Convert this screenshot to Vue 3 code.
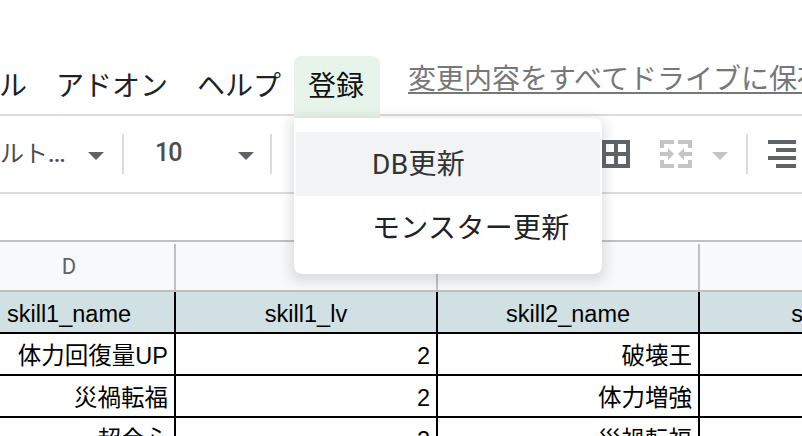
<script setup>
const headings = ['D', '', '', '']
const rows = [
  ['体力回復量UP', '2', '破壊王', ''],
  ['災禍転福', '2', '体力増強', ''],
  ['超会心', '2', '災禍転福', ''],
]
const titles = ['skill1_name', 'skill1_lv', 'skill2_name', 'skill2_lv']
const actions = ['DB更新', 'モンスター更新']
</script>

<template>
  <div class="window">
    <nav class="menubar">
      <span class="menu first">ル</span>
      <span class="menu">アドオン</span>
      <span class="menu help">ヘルプ</span>
      <div class="menu active">
        登録
        <ul class="dropdown">
          <li v-for="(a, i) in actions" :key="a" :class="{ hover: i === 0 }">{{ a }}</li>
        </ul>
      </div>
      <span class="saved">変更内容をすべてドライブに保存</span>
    </nav>

    <div class="toolbar">
      <span class="font-name">ルト<span class="dots">...</span></span>
      <svg class="caret" viewBox="0 0 16 8"><path d="M0 0H16L8 8Z" /></svg>
      <i class="divider d1"></i>
      <span class="font-size">10</span>
      <svg class="caret" viewBox="0 0 16 8"><path d="M0 0H16L8 8Z" /></svg>
      <i class="divider d2"></i>
      <svg class="borders" width="28" height="28" viewBox="0 0 28 28">
        <path fill-rule="evenodd" d="M0 0H28V28H0ZM4 4V12H12V4ZM16 4V12H24V4ZM4 16V24H12V16ZM16 16V24H24V16Z" />
      </svg>
      <svg class="merge" width="32" height="28" viewBox="0 0 32 28">
        <path d="M0 0H14V4H4V8H0ZM18 0H32V8H28V4H18ZM0 20H4V24H14V28H0ZM28 20H32V28H18V24H28ZM0 12H8V8L14 14L8 20V16H0ZM32 12H24V8L18 14L24 20V16H32Z" />
      </svg>
      <svg class="caret muted" viewBox="0 0 16 8"><path d="M0 0H16L8 8Z" /></svg>
      <i class="divider d3"></i>
      <svg class="align" width="28" height="28" viewBox="0 0 28 28">
        <path d="M0 0H28V4H0ZM8 8H28V12H8ZM0 16H28V20H0ZM8 24H28V28H8Z" />
      </svg>
    </div>

    <div class="formula"></div>

    <div class="sheet">
      <div class="line heads">
        <div v-for="(h, i) in headings" :key="i" class="head">{{ h }}</div>
      </div>
      <div class="line">
        <div v-for="t in titles" :key="t" class="cell title">{{ t }}</div>
      </div>
      <div v-for="(r, i) in rows" :key="i" class="line">
        <div v-for="(c, j) in r" :key="j" class="cell">{{ c }}</div>
      </div>
    </div>
  </div>
</template>

<style>
body {
  margin: 0;
  overflow: hidden;
}
</style>

<style scoped>
.window {
  box-sizing: border-box;
  width: 802px;
  height: 436px;
  padding-top: 56px;
  overflow: hidden;
  background: #fff;
  font-family: Roboto, "Noto Sans CJK JP", sans-serif;
  color: #202124;
}
.menubar {
  box-sizing: border-box;
  display: flex;
  height: 60px;
  border-bottom: 2px solid #dadce0;
  font-size: 28px;
  line-height: 61px;
  white-space: nowrap;
}
.menu {
  box-sizing: border-box;
  flex: none;
  height: 62px;
  padding: 0 14px;
  margin-right: 1px;
}
.first {
  padding-left: 0;
  margin-left: -1px;
  margin-right: 1px;
}
.help {
  margin-right: -1px;
}
.active {
  position: relative;
  z-index: 3;
  width: 86px;
  margin-right: 28px;
  border-radius: 8px 8px 0 0;
  background: #e6f4ea;
  color: #111;
}
.saved {
  line-height: 47px;
  color: #777;
  text-decoration: underline;
  text-decoration-thickness: 2px;
  text-decoration-skip-ink: none;
  text-underline-offset: 3px;
}
.dropdown {
  position: absolute;
  left: 0;
  top: 62px;
  box-sizing: border-box;
  width: 308px;
  height: 156px;
  margin: 0;
  padding: 14px 2px;
  border-radius: 0 8px 8px 8px;
  background: #fff;
  box-shadow: 0 4px 12px 4px rgba(60, 64, 67, 0.15);
  list-style: none;
  color: #202124;
  letter-spacing: 0.3px;
}
.dropdown li {
  box-sizing: border-box;
  height: 64px;
  padding-left: 76px;
  line-height: 66px;
}
.dropdown .hover {
  background: #f1f3f4;
  color: #333;
}
.toolbar {
  box-sizing: border-box;
  display: flex;
  align-items: center;
  height: 78px;
  border-bottom: 2px solid #dadce0;
  color: #4d4d4d;
  fill: #5f6368;
}
.toolbar > * {
  flex: none;
}
.font-name {
  width: 88px;
  font-size: 24px;
  line-height: 40px;
}
.dots {
  font-weight: 500;
  letter-spacing: -1px;
}
.caret {
  width: 16px;
  height: 8px;
  margin-top: 4px;
}
.divider {
  width: 2px;
  height: 40px;
  background: #dadce0;
}
.d1 {
  margin-left: 18px;
}
.font-size {
  width: 83px;
  margin-left: 31px;
  font-size: 25px;
  font-weight: 500;
  line-height: 36px;
  letter-spacing: -1px;
  margin-top: -2px;
}
.d2 {
  margin-left: 16px;
}
.borders {
  margin-left: 330px;
}
.merge {
  margin-left: 30px;
}
.merge,
.muted {
  fill: #c3c4c6;
}
.muted {
  margin-left: 20px;
}
.d3 {
  margin-left: 18px;
}
.align {
  margin-left: 20px;
}
.formula {
  height: 46px;
}
.sheet {
  width: 998px;
  margin-left: -36px;
  border-top: 2px solid #c0c0c0;
}
.line {
  display: grid;
  grid-template-columns: 212px repeat(3, 262px);
}
.heads {
  box-sizing: border-box;
  height: 50px;
  padding-top: 2px;
  border-bottom: 2px solid #c0c0c0;
  background: #f8f9fa;
}
.head {
  border-right: 2px solid #c0c0c0;
  font-size: 22px;
  line-height: 46px;
  text-align: center;
  color: #5f6368;
}
.cell {
  box-sizing: border-box;
  height: 42px;
  padding-right: 6px;
  border-right: 2px solid #000;
  border-bottom: 2px solid #000;
  font-family: "Liberation Sans", "Noto Sans CJK JP", sans-serif;
  font-size: 23.5px;
  line-height: 45px;
  text-align: right;
  color: #000;
}
.title {
  padding: 0;
  background: #d0e0e3;
  text-align: center;
}
.title:last-child {
  padding-left: 5px;
}
</style>
